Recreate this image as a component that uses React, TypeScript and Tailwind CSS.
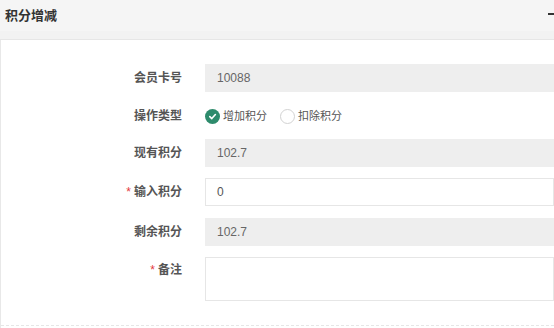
import React from 'react';

const font = { fontFamily: '"Liberation Sans", "Noto Sans CJK SC", sans-serif' };

const Label = ({ text, required }: { text: string; required?: boolean }) => (
  <div className="w-[182px] shrink-0 pr-[1px] text-right text-[12px] font-bold text-[#555]">
    {required && <span className="mr-[3px] font-normal text-[#e4393c]">*</span>}
    {text}
  </div>
);

export default function App() {
  return (
    <div className="h-[328px] w-[554px] overflow-hidden bg-white" style={font}>
      <div className="flex h-[31px] items-center justify-between bg-[#f5f5f5] pl-[5px]">
        <h3 className="text-[13px] font-bold text-[#333]">积分增减</h3>
        <div className="mt-[-3px] h-[2px] w-[8px] translate-x-[2px] bg-[#333]" />
      </div>
      <div className="h-[9px] border-b border-[#e6e6e6] bg-[#f2f2f2]" />
      <div className="h-[288px] border-l border-[#e8e8e8] pt-[24px]">
        <div className="flex items-center">
          <Label text="会员卡号" />
          <div className="ml-[22px] flex h-[28px] w-[400px] items-center bg-[#eeeeee] pl-[12px] text-[12px] text-[#666]">10088</div>
        </div>
        <div className="mt-[11px] flex h-[26px] items-center">
          <Label text="操作类型" />
          <div className="ml-[22px] flex items-center text-[11px] text-[#555]">
            <span className="flex h-[15px] w-[15px] items-center justify-center rounded-full bg-[#2e8b6c]">
              <svg width="9" height="9" viewBox="0 0 10 10" fill="none">
                <path d="M2 5.2 4.2 7.3 8.2 2.8" stroke="#fff" strokeWidth="1.8" strokeLinecap="round" strokeLinejoin="round" />
              </svg>
            </span>
            <span className="ml-[3px]">增加积分</span>
            <span className="ml-[13px] h-[15px] w-[15px] rounded-full border border-[#d2d2d2] bg-white" />
            <span className="ml-[3px]">扣除积分</span>
          </div>
        </div>
        <div className="mt-[10px] flex items-center">
          <Label text="现有积分" />
          <div className="ml-[22px] flex h-[28px] w-[400px] items-center bg-[#eeeeee] pl-[12px] text-[12px] text-[#666]">102.7</div>
        </div>
        <div className="mt-[11px] flex items-center">
          <Label text="输入积分" required />
          <div className="ml-[22px] flex h-[28px] w-[400px] items-center border border-[#e6e6e6] bg-white pl-[11px] text-[12px] text-[#555]">0</div>
        </div>
        <div className="mt-[12px] flex items-center">
          <Label text="剩余积分" />
          <div className="ml-[22px] flex h-[28px] w-[400px] items-center bg-[#eeeeee] pl-[12px] text-[12px] text-[#666]">102.7</div>
        </div>
        <div className="mt-[11px] flex items-start">
          <div className="pt-[4px]">
            <Label text="备注" required />
          </div>
          <div className="ml-[22px] h-[44px] w-[400px] border border-[#e6e6e6] bg-white" />
        </div>
        <div className="mt-[24px] border-b border-dashed border-[#e6e6e6]" />
      </div>
    </div>
  );
}
